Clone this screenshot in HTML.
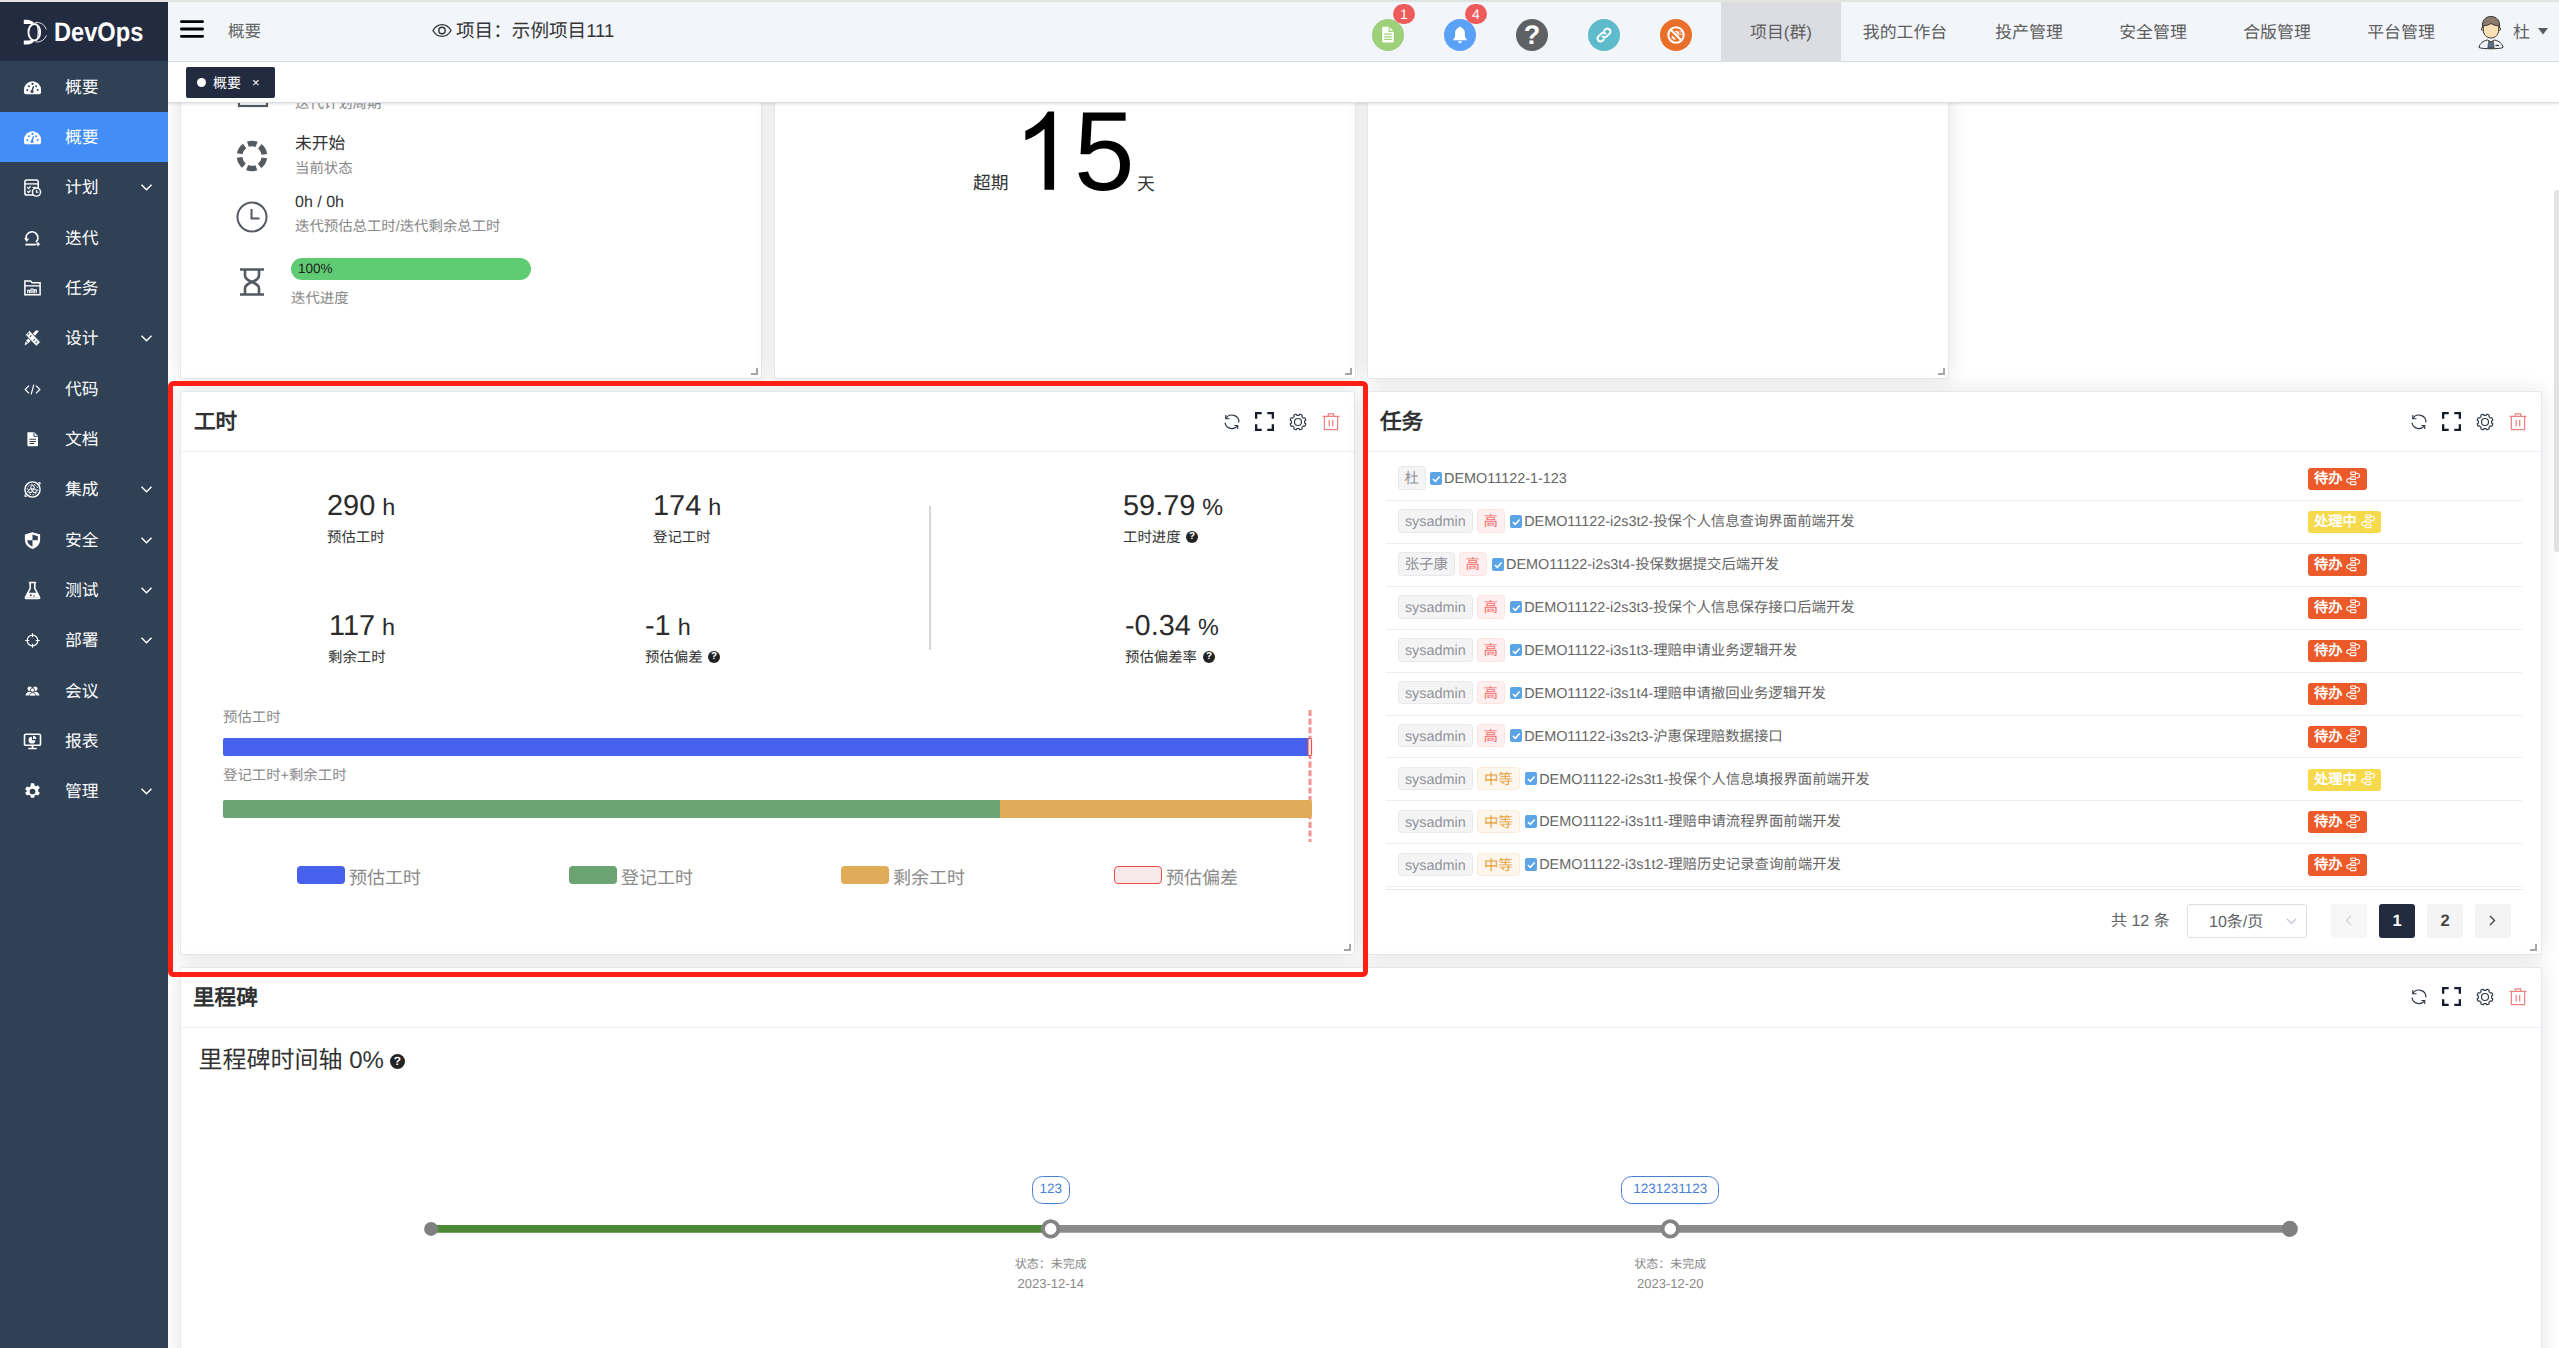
<!DOCTYPE html>
<html lang="zh-CN">
<head>
<meta charset="utf-8">
<title>DevOps</title>
<style>
*{box-sizing:border-box;margin:0;padding:0}
html,body{width:2559px;height:1348px;overflow:hidden;background:#fff}
body{font-family:"Liberation Sans",sans-serif;color:#333;position:relative;text-rendering:geometricPrecision}
.abs{position:absolute}
svg{display:block}
/* ---------- sidebar ---------- */
#side{position:absolute;left:0;top:0;width:168px;height:1348px;background:#304156;z-index:10}
#logo{position:absolute;left:0;top:0;width:168px;height:61px;background:#222b40}
#logo .t{position:absolute;left:53.500px;top:13.700px;font-size:26.700px;font-weight:bold;color:#fff;line-height:36px;transform:scaleX(.885);transform-origin:0 0;white-space:nowrap}
.mi{position:absolute;left:0;width:168px;height:50.350px;color:#fff;font-size:16.8px;line-height:50.4px}
.mi .tx{position:absolute;left:65px;top:1px}
.mi svg.ic{position:absolute;left:23px;top:16px;width:19px;height:19px}
.mi svg.ar{position:absolute;left:140px;top:21px;width:13px;height:9px}
.mi.act{background:#438ef6}
/* ---------- header ---------- */
#hdr{position:absolute;left:168px;top:0;width:2391px;height:62px;background:#f2f5fa;border-bottom:1px solid #d8dce5;z-index:8}
#topline{position:absolute;left:0;top:0;width:2559px;height:2px;background:#e3e4e2;z-index:20}
.nav{position:absolute;top:2px;height:59px;line-height:61px;font-size:16.900px;color:#5e5e5e;text-align:center;width:124px}
.nav.on{background:#dcdde2;width:120px}
.circ{position:absolute;top:19px;width:32px;height:32px;border-radius:16px}
.circ svg{position:absolute;left:7px;top:7px;width:18px;height:18px}
.bdg{position:absolute;top:4px;width:22px;height:19.500px;border-radius:10px;background:#ef5a5a;color:#fff;font-size:14px;line-height:20px;text-align:center}
/* ---------- tabs bar ---------- */
#tabs{position:absolute;left:168px;top:62px;width:2391px;height:41px;background:#fff;border-bottom:1px solid #d8dce5;box-shadow:0 1px 3px rgba(0,0,0,.12);z-index:7}
#tab1{position:absolute;left:18px;top:5px;width:89px;height:31px;background:#222b40;border-radius:2px;color:#fff;font-size:14px;line-height:32px}
/* ---------- cards ---------- */
.card{position:absolute;background:#fff;border:1px solid #e6e7ef;box-shadow:0 1px 22px rgba(0,0,0,.11);border-radius:3px}
.ctitle{position:absolute;left:13px;top:15px;font-size:21.6px;font-weight:bold;color:#303133;line-height:30px}
.chr{position:absolute;left:0;right:0;top:59px;height:1px;background:#ebeef5}
.rh{position:absolute;width:7px;height:7px;border-right:2px solid #a6a6a6;border-bottom:2px solid #a6a6a6}
.tool{position:absolute;top:20px;width:20px;height:20px}
/* tool icons */
.q{position:absolute;width:12px;height:12px;border-radius:6px;background:#222;color:#fff;font-size:10px;font-weight:bold;line-height:12.500px;text-align:center}
.num{position:absolute;white-space:nowrap;color:#2b2b2b;line-height:34px;font-size:28.900px;margin-top:2.300px;word-spacing:-1px}
.num small{font-size:23.400px}
.lab{position:absolute;white-space:nowrap;color:#333;font-size:14.400px;line-height:18px;margin-top:1px}
.glab{position:absolute;white-space:nowrap;color:#8a8a8a;font-size:14.400px;line-height:18px}
.leg{position:absolute;top:474px;width:48px;height:18px;border-radius:4px}
.legt{position:absolute;top:472px;font-size:18px;line-height:28px;color:#8a8a8a;white-space:nowrap}
/* tasks */
.trow{position:absolute;left:18px;width:1136px;height:42.900px;border-bottom:1px solid #ebeef5}
.tag{position:absolute;top:8.300px;height:23.500px;line-height:25.500px;padding:0 6px;font-size:14.400px;border-radius:3.500px;border:1px solid #e9e9ec;background:#f4f4f5;color:#909399;white-space:nowrap}
.tag.hi{background:#fef0f0;border-color:#fde2e2;color:#f56c6c}
.tag.mid{background:#fdf6ec;border-color:#faecd8;color:#e6a23c}
.chk{position:absolute;top:13.900px;width:12.300px;height:12.700px;border-radius:2px;background:#5ba4e6}
.chk svg{width:12.300px;height:12.700px}
.tt{position:absolute;top:11px;font-size:14.400px;line-height:20px;color:#666;white-space:nowrap}
.st{position:absolute;left:922px;top:10px;height:22px;border-radius:3px;color:#fff;font-size:14.200px;font-weight:bold;line-height:22px;white-space:nowrap}
.st.todo{background:#ec5a29;width:59px}
.st.doing{background:#f7d94c;width:73px}
.st span{position:absolute;left:6px;top:0}
.st svg{position:absolute;top:2.500px;width:15px;height:15px}
.pg{position:absolute;top:512px;width:36px;height:34px;border-radius:3px;background:#f4f4f5;text-align:center;line-height:35px;font-size:16.500px;font-weight:bold;color:#444}
/* milestone */
.mlab{position:absolute;height:27.400px;border:1.300px solid #4a7fd4;border-radius:10.500px;color:#4a7fd4;font-size:13.500px;line-height:24.500px;text-align:center;background:#fff}
.mtx{position:absolute;width:200px;text-align:center;color:#8a8a8a;white-space:nowrap}

</style>
</head>
<body>
<div id="side">
<div id="logo"><svg class="abs" style="left:20px;top:16px;width:32px;height:32px" viewBox="20 16 32 32"><path d="M23.800 19.800H27.500C30.500 20.200 32.600 21.400 34.200 22.900L31.800 24.300C30.600 24.050 29.600 24 28.500 24H23.800Z" fill="#fff"/><path d="M23.800 44.600H27.500C30.500 44.200 32.600 43 34.200 41.500L31.800 40.100C30.600 40.350 29.600 40.400 28.500 40.400H23.800Z" fill="#fff"/><ellipse cx="34.300" cy="32.200" rx="5.850" ry="8.200" fill="none" stroke="#fff" stroke-width="1.900"/><path d="M36.200 24.600Q42.200 32.200 36.200 39.800Q39.300 32.200 36.200 24.600Z" fill="#fff"/><path d="M35 22.500A9.800 9.800 0 0 1 46.300 29.500M46.400 35.400A9.800 9.800 0 0 1 35.500 41.900" fill="none" stroke="#fff" stroke-width=".9" opacity=".9"/></svg><div class="t">DevOps</div></div>
<div class="mi" style="top:61.5px"><svg class="ic" viewBox="0 0 20 20"><g transform=""><path d="M1 12.600a9 9.200 0 0 1 18 0v2.400a2 2 0 0 1-2 2H3a2 2 0 0 1-2-2z" fill="#fff"/><circle cx="4.6" cy="12.6" r="1.1" fill="#304156"/><circle cx="6.3" cy="8.6" r="1.1" fill="#304156"/><circle cx="10" cy="6.200" r="1.1" fill="#304156"/><circle cx="13.8" cy="8.6" r="1.1" fill="#304156"/><circle cx="15.5" cy="12.6" r="1.1" fill="#304156"/><path d="M10.9 9.3l-1.3 4.2" stroke="#304156" stroke-width="1.5" stroke-linecap="round"/><circle cx="9.5" cy="14.2" r="1.6" fill="#304156"/></g></svg><span class="tx">概要</span></div>
<div class="mi act" style="top:111.8px"><svg class="ic" viewBox="0 0 20 20"><g transform=""><path d="M1 12.600a9 9.200 0 0 1 18 0v2.400a2 2 0 0 1-2 2H3a2 2 0 0 1-2-2z" fill="#fff"/><circle cx="4.6" cy="12.6" r="1.1" fill="#438ef6"/><circle cx="6.3" cy="8.6" r="1.1" fill="#438ef6"/><circle cx="10" cy="6.200" r="1.1" fill="#438ef6"/><circle cx="13.8" cy="8.6" r="1.1" fill="#438ef6"/><circle cx="15.5" cy="12.6" r="1.1" fill="#438ef6"/><path d="M10.9 9.3l-1.3 4.2" stroke="#438ef6" stroke-width="1.5" stroke-linecap="round"/><circle cx="9.5" cy="14.2" r="1.6" fill="#438ef6"/></g></svg><span class="tx">概要</span></div>
<div class="mi" style="top:162.2px"><svg class="ic" viewBox="0 0 20 20"><g transform=""><rect x="2" y="2" width="14" height="16" rx="2" fill="none" stroke="#fff" stroke-width="1.6"/><path d="M2 6.2h14" stroke="#fff" stroke-width="1.4"/><path d="M4.5 9.8l1.3 1.3 2.2-2.4M4.5 14l1.3 1.3 2.2-2.4" fill="none" stroke="#fff" stroke-width="1.3"/><path d="M10 10h3.5" stroke="#fff" stroke-width="1.3"/><circle cx="14.2" cy="14.8" r="4.3" fill="#304156" stroke="#fff" stroke-width="1.5"/><path d="M14.2 12.6v2.4h2" fill="none" stroke="#fff" stroke-width="1.3"/></g></svg><span class="tx">计划</span><svg class="ar" viewBox="0 0 13 9"><path d="M1.500 1.800l5 5 5-5" fill="none" stroke="#fff" stroke-width="1.500"/></svg></div>
<div class="mi" style="top:212.6px"><svg class="ic" viewBox="0 0 20 20"><g transform=""><path d="M3.600 11.200A6.200 6.200 0 1 1 13.600 13.800" fill="none" stroke="#fff" stroke-width="1.900"/><path d="M1.200 9.800l2.600 4 2.800-3.600z" fill="#fff"/><path d="M2.500 16.400h11" stroke="#fff" stroke-width="1.900"/><path d="M15.800 13.400l.9 1.700 1.700.9-1.700.9-.9 1.700-.9-1.700-1.700-.9 1.700-.9z" fill="#fff"/></g></svg><span class="tx">迭代</span></div>
<div class="mi" style="top:262.9px"><svg class="ic" viewBox="0 0 20 20"><g transform="translate(0,-1)"><path d="M2 3h6l1.5 2H18v12.5H2z" fill="none" stroke="#fff" stroke-width="1.6"/><path d="M2 8.2h16" stroke="#fff" stroke-width="1.4"/><path d="M5 16v-3h2v3M8.5 16v-4.5h2V16M12 16v-3.5h2V16" fill="none" stroke="#fff" stroke-width="1.2"/></g></svg><span class="tx">任务</span></div>
<div class="mi" style="top:313.2px"><svg class="ic" viewBox="0 0 20 20"><g transform="translate(20,0) scale(-1,1)"><path d="M3.2 2.2l3-1 10.6 11.2-2.6 2.6z" fill="#fff"/><path d="M14.8 15.6l2.4-2.4 1.2 4z" fill="#fff"/><path d="M13.2 1.6l4.4 4.4-11.6 12.2-4.4-4.4z" fill="#fff" stroke="#304156" stroke-width="1"/><path d="M5 13l1.6 1.6M7.4 10.6L9 12.2M11.2 6.6l1.6 1.6M13.4 4.2L15 5.8" stroke="#304156" stroke-width="1.1"/></g></svg><span class="tx">设计</span><svg class="ar" viewBox="0 0 13 9"><path d="M1.500 1.800l5 5 5-5" fill="none" stroke="#fff" stroke-width="1.500"/></svg></div>
<div class="mi" style="top:363.6px"><svg class="ic" viewBox="0 0 20 20"><g transform="translate(.8,.8) scale(.92)"><path d="M6 5.5L1.6 10 6 14.5M14 5.5l4.4 4.5-4.4 4.5M11.6 4.5l-3.2 11" fill="none" stroke="#fff" stroke-width="1.350"/></g></svg><span class="tx">代码</span></div>
<div class="mi" style="top:413.9px"><svg class="ic" viewBox="0 0 20 20"><g transform="translate(1.600,1.200) scale(.86)"><path d="M4 1.5h8l4.5 4.5v11a1.5 1.5 0 0 1-1.5 1.5H5A1.5 1.5 0 0 1 3.5 17V2z" fill="#fff"/><path d="M11.6 1.8v4.6h4.6" fill="none" stroke="#304156" stroke-width="1.2"/><path d="M6 10h8M6 12.6h8M6 15.2h6" stroke="#304156" stroke-width="1.3"/></g></svg><span class="tx">文档</span></div>
<div class="mi" style="top:464.3px"><svg class="ic" viewBox="0 0 20 20"><g transform=""><circle cx="10" cy="10" r="8" fill="none" stroke="#fff" stroke-width="1.5"/><circle cx="10" cy="10" r="5.6" fill="none" stroke="#fff" stroke-width="1" stroke-dasharray="2 1.4"/><circle cx="10" cy="7.6" r="1.9" fill="none" stroke="#fff" stroke-width="1.1"/><circle cx="7.8" cy="11.4" r="1.9" fill="none" stroke="#fff" stroke-width="1.1"/><circle cx="12.2" cy="11.4" r="1.9" fill="none" stroke="#fff" stroke-width="1.1"/><path d="M16 2.6l2 .4-.6 2M4 17.4l-2-.4.6-2" fill="none" stroke="#fff" stroke-width="1.2"/></g></svg><span class="tx">集成</span><svg class="ar" viewBox="0 0 13 9"><path d="M1.500 1.800l5 5 5-5" fill="none" stroke="#fff" stroke-width="1.500"/></svg></div>
<div class="mi" style="top:514.7px"><svg class="ic" viewBox="0 0 20 20"><g transform=""><path d="M10 1.2l8 2.6v5.4c0 4.6-3.2 8-8 9.8-4.8-1.8-8-5.2-8-9.8V3.8z" fill="#fff"/><path d="M10 3.6v6.2h5.6V5.4z" fill="#304156"/><path d="M10 9.8v6.8c-3.2-1.4-5.4-3.8-5.6-6.8z" fill="#304156"/></g></svg><span class="tx">安全</span><svg class="ar" viewBox="0 0 13 9"><path d="M1.500 1.800l5 5 5-5" fill="none" stroke="#fff" stroke-width="1.500"/></svg></div>
<div class="mi" style="top:565.0px"><svg class="ic" viewBox="0 0 20 20"><g transform=""><path d="M6.2 1.6h7.6M7.6 1.6v6.2L2.6 17.2a.8.8 0 0 0 .7 1.2h13.4a.8.8 0 0 0 .7-1.2L12.4 7.8V1.6" fill="none" stroke="#fff" stroke-width="1.7"/><path d="M5.6 12.4h8.8l2.6 5.2H3z" fill="#fff"/><circle cx="8.2" cy="15" r="1" fill="#304156"/><circle cx="11.6" cy="15.8" r=".8" fill="#304156"/></g></svg><span class="tx">测试</span><svg class="ar" viewBox="0 0 13 9"><path d="M1.500 1.800l5 5 5-5" fill="none" stroke="#fff" stroke-width="1.500"/></svg></div>
<div class="mi" style="top:615.4px"><svg class="ic" viewBox="0 0 20 20"><g transform="translate(1.500,1.500) scale(.85)"><circle cx="10" cy="10" r="6.6" fill="none" stroke="#fff" stroke-width="1.4"/><path d="M10 1v5M10 14v5M1 10h5M14 10h5" stroke="#fff" stroke-width="1.4"/></g></svg><span class="tx">部署</span><svg class="ar" viewBox="0 0 13 9"><path d="M1.500 1.800l5 5 5-5" fill="none" stroke="#fff" stroke-width="1.500"/></svg></div>
<div class="mi" style="top:665.7px"><svg class="ic" viewBox="0 0 20 20"><g transform="translate(1.500,1.200) scale(.85)"><circle cx="6.6" cy="7" r="2.8" fill="#fff"/><circle cx="13.4" cy="7" r="2.8" fill="#fff"/><path d="M1.4 15.4c.4-3 2.4-4.6 5.2-4.6 1.4 0 2.6.4 3.4 1.2.8-.8 2-1.2 3.4-1.2 2.8 0 4.8 1.600 5.200 4.600z" fill="#fff"/><circle cx="10" cy="8.600" r="2.600" fill="#fff" stroke="#304156" stroke-width="1"/><path d="M5.600 16c.4-2.800 2-4.200 4.400-4.200s4 1.400 4.400 4.200z" fill="#fff" stroke="#304156" stroke-width="1"/></g></svg><span class="tx">会议</span></div>
<div class="mi" style="top:716.1px"><svg class="ic" viewBox="0 0 20 20"><g transform=""><rect x="1.6" y="2.4" width="16.8" height="11.6" rx="1.2" fill="none" stroke="#fff" stroke-width="1.7"/><path d="M10 14v2.600M5.600 17.400h8.800" stroke="#fff" stroke-width="1.700"/><path d="M9.400 5v3.600h3.600a3.600 3.600 0 1 1-3.600-3.600z" fill="#fff"/><path d="M10.600 3.900a3.600 3.600 0 0 1 3.500 3.500h-3.500z" fill="#fff"/></g></svg><span class="tx">报表</span></div>
<div class="mi" style="top:766.4px"><svg class="ic" viewBox="0 0 20 20"><g transform=""><path d="M8.300 1.200h3.400l.5 2.400 1.500.800 2.300-.900 1.700 2.900-1.800 1.600v1.800l1.800 1.600-1.700 2.900-2.300-.900-1.500.800-.5 2.400H8.300l-.5-2.400-1.500-.800-2.300.900-1.700-2.900 1.800-1.600V9.200L2.300 7.600 4 4.700l2.300.900 1.500-.800z" fill="#fff"/><circle cx="10" cy="10" r="3" fill="#304156"/></g></svg><span class="tx">管理</span><svg class="ar" viewBox="0 0 13 9"><path d="M1.500 1.800l5 5 5-5" fill="none" stroke="#fff" stroke-width="1.500"/></svg></div>
</div>
<div id="hdr">
<svg class="abs" style="left:12px;top:19px;width:24px;height:20px" viewBox="0 0 24 20"><path d="M1.400 2.600h21.200M1.400 10h21.200M1.400 17.400h21.200" stroke="#000" stroke-width="2.800" stroke-linecap="round"/></svg>
<div class="abs" style="left:60px;top:20px;font-size:16.600px;line-height:24px;color:#666">概要</div>
<svg class="abs" style="left:264px;top:23px;width:20px;height:15px" viewBox="0 0 20 15"><path d="M1 7.500C3.200 3.600 6.300 1.600 10 1.600s6.800 2 9 5.900c-2.200 3.900-5.300 5.900-9 5.900S3.200 11.400 1 7.500z" fill="none" stroke="#333" stroke-width="1.400"/><circle cx="10" cy="7.500" r="3.200" fill="none" stroke="#333" stroke-width="1.400"/></svg>
<div class="abs" style="left:288px;top:18px;font-size:18.600px;line-height:26px;color:#333;white-space:nowrap">项目：示例项目111</div>
<div class="circ" style="left:1203.9px;background:#9ecf79"><svg viewBox="0 0 18 18"><path d="M3.200 1.600a.8.8 0 0 1 .8-.8h6.400l4.400 4.400v10.600a.8.8 0 0 1-.8.8H4a.8.8 0 0 1-.8-.8z" fill="#fff"/><path d="M5.200 8.200h7.600M5.200 10.800h7.600M5.200 13.400h7.600" stroke="#9ecf79" stroke-width="1.300"/><path d="M10.200 .8v4.600h4.600" fill="none" stroke="#9ecf79" stroke-width="1.200"/></svg></div>
<div class="circ" style="left:1275.9px;background:#5aa2f8"><svg viewBox="1.300 1.300 15.400 15.400"><path d="M9 1.800c-.700 0-1.100.500-1.100 1.100-2 .600-3.100 2.300-3.100 4.500v3.200l-1.500 2v.800h11.400v-.800l-1.500-2V7.400c0-2.200-1.100-3.900-3.100-4.500 0-.600-.400-1.100-1.100-1.100zM7.400 14.400a1.600 1.600 0 0 0 3.200 0z" fill="#fff"/></svg></div>
<div class="circ" style="left:1347.9px;background:#5f6165"><div style="position:absolute;left:0;top:0;width:32px;height:32px;line-height:33px;text-align:center;color:#fff;font-weight:bold;font-size:27px">?</div></div>
<div class="circ" style="left:1419.9px;background:#5dbbcb"><svg viewBox="0 0 18 18"><path d="M7.600 10.400a3 3 0 0 0 4.200 0l3-3a3 3 0 0 0-4.200-4.200l-1.300 1.300M10.400 7.600a3 3 0 0 0-4.200 0l-3 3a3 3 0 0 0 4.200 4.200l1.300-1.300" fill="none" stroke="#fff" stroke-width="2" stroke-linecap="round"/></svg></div>
<div class="circ" style="left:1491.9px;background:#e8702a"><svg viewBox="0.800 0.800 16.400 16.400"><circle cx="9" cy="9" r="7" fill="none" stroke="#fff" stroke-width="1.900"/><path d="M4 4l10 10" stroke="#fff" stroke-width="1.900"/><path d="M8 5.200c2-.6 4 .6 4.200 2.600l-.4 2.200zM5.200 9.200l4.200 3.800-2.600.2c-1.200-.8-1.800-2.400-1.600-4z" fill="#fff"/><path d="M12.200 6.200h1.800M12.600 8.400h1.600M6.200 11.200l-1.400.8" stroke="#fff" stroke-width=".9"/></svg></div>
<div class="bdg" style="left:1225px">1</div>
<div class="bdg" style="left:1297px">4</div>
<div class="nav on" style="left:1553px">项目(群)</div>
<div class="nav" style="left:1675px">我的工作台</div>
<div class="nav" style="left:1799px">投产管理</div>
<div class="nav" style="left:1923px">安全管理</div>
<div class="nav" style="left:2047px">合版管理</div>
<div class="nav" style="left:2171px">平台管理</div>
<svg class="abs" style="left:2309px;top:14px;width:28px;height:36px" viewBox="0 0 28 36"><ellipse cx="14" cy="31" rx="13" ry="5" fill="#fafbfc"/><path d="M5.500 13.500c-.8-6.500 2.600-11 8.500-11s9.300 4.500 8.500 11l-1 1.500H6.500z" fill="#8d7b70" stroke="#3a3330" stroke-width="1"/><circle cx="5.800" cy="15" r="1.500" fill="#f8dcb0" stroke="#3a3330" stroke-width=".8"/><circle cx="22.200" cy="15" r="1.500" fill="#f8dcb0" stroke="#3a3330" stroke-width=".8"/><path d="M6.300 11.500c2.500.5 5-.5 7.700-2 2.700 1.500 5.200 2.500 7.700 2v4.500c0 4.500-3.200 8-7.700 8s-7.700-3.500-7.700-8z" fill="#fbe0b5" stroke="#3a3330" stroke-width="1"/><path d="M2 33.500c.5-4 4-6.500 8.500-7.500l3.500 2 3.500-2c4.500 1 8 3.500 8.500 7.500-3 1.700-21 1.700-24 0z" fill="#f3f4f5" stroke="#2e2e2e" stroke-width="1"/><path d="M11.600 27.500h4.800l.8 6.500h-6.400z" fill="#5b6c85" stroke="#333" stroke-width=".6"/><path d="M18.500 31.500h3.500" stroke="#333" stroke-width="1.200"/></svg>
<div class="abs" style="left:2345px;top:20.500px;font-size:17px;line-height:24px;color:#606060">杜</div>
<svg class="abs" style="left:2370px;top:28px;width:10px;height:6.500px" viewBox="0 0 10 6.500"><path d="M0 0h10L5 6.500z" fill="#5a5a60"/></svg>
</div>
<div id="topline"></div>
<div id="tabs"><div id="tab1"><span class="abs" style="left:11px;top:11px;width:9px;height:9px;border-radius:5px;background:#fff"></span><span class="abs" style="left:27px;top:0">概要</span><span class="abs" style="left:66px;top:0;font-size:13px">×</span></div></div>
<div class="card" style="left:180px;top:40px;width:582px;height:339px"><div class="abs" style="left:-1px;top:0;width:581px;height:339px">
<svg class="abs" style="left:56.500px;top:35px;width:32px;height:32px" viewBox="0 0 32 32"><rect x="2" y="4" width="28" height="26" fill="none" stroke="#555a61" stroke-width="2.200"/></svg>
<div class="abs" style="left:115px;top:54px;font-size:14.400px;color:#888;line-height:18px">迭代计划周期</div>
<svg class="abs" style="left:56px;top:99px;width:32px;height:32px" viewBox="0 0 32 32"><circle cx="16" cy="16" r="12.500" fill="none" stroke="#555a61" stroke-width="5.500" stroke-dasharray="9.400 3.690" stroke-dashoffset="4.700" transform="rotate(-90 16 16)"/></svg>
<div class="abs" style="left:115px;top:91px;font-size:16.800px;color:#333;line-height:24px">未开始</div>
<div class="abs" style="left:115px;top:119px;font-size:14.400px;color:#888;line-height:18px">当前状态</div>
<svg class="abs" style="left:56px;top:160px;width:32px;height:32px" viewBox="0 0 32 32"><circle cx="16" cy="16" r="14.500" fill="none" stroke="#555a61" stroke-width="2"/><path d="M15.500 8v9.500h8" fill="none" stroke="#555a61" stroke-width="2"/></svg>
<div class="abs" style="left:115px;top:150px;font-size:16px;color:#333;line-height:24px">0h / 0h</div>
<div class="abs" style="left:115px;top:177px;font-size:14.400px;color:#888;line-height:18px">迭代预估总工时/迭代剩余总工时</div>
<svg class="abs" style="left:60px;top:227px;width:24px;height:28px" viewBox="0 0 24 28"><path d="M0 1.500h24M0 26.500h24" stroke="#555a61" stroke-width="2.400"/><path d="M5 2v5.500c0 3.500 3.500 5 7 6.500 3.500-1.500 7-3 7-6.500V2M5 26v-5.500c0-3.500 3.500-5 7-6.500 3.500 1.500 7 3 7 6.500V26" fill="none" stroke="#555a61" stroke-width="2.600"/></svg>
<div class="abs" style="left:111px;top:217px;width:240px;height:22px;border-radius:11px;background:#5fcb73"></div>
<div class="abs" style="left:118px;top:219px;font-size:13.500px;color:#222;line-height:18px">100%</div>
<div class="abs" style="left:111px;top:249px;font-size:14.400px;color:#888;line-height:18px">迭代进度</div>
<div class="rh" style="left:571px;top:327px"></div>
</div></div>
<div class="card" style="left:774px;top:40px;width:582px;height:339px">
<div class="abs" style="left:198px;top:130px;font-size:17.800px;color:#333;line-height:24px">超期</div>
<svg class="abs" style="left:245px;top:65px;width:44px;height:90px" viewBox="0 0 44 90"><path transform="translate(-6.500,83.800) scale(.0532,-.0532)" d="M763 0H583V1147Q518 1085 412.500 1023Q307 961 223 930V1104Q374 1175 487 1276Q600 1377 647 1472H763Z" fill="#000"/></svg>
<div class="abs" id="five" style="left:299px;top:49px;font-size:112.800px;color:#000;line-height:120px;transform:scaleX(.965);transform-origin:0 0;margin-top:.7px">5</div>
<div class="abs" style="left:362px;top:131px;font-size:17.800px;color:#333;line-height:24px">天</div>
<div class="rh" style="left:570px;top:326.500px"></div>
</div>
<div class="card" style="left:1367px;top:40px;width:582px;height:339px">
<div class="rh" style="left:570px;top:327px"></div>
</div>
<div class="abs" style="left:2553.500px;top:190px;width:6px;height:362px;border-radius:3px;background:#e3e3e3"></div>
<div class="abs" style="left:168px;top:381.100px;width:1199.700px;height:595.600px;border:5.400px solid #ff2015;border-radius:5.500px;z-index:12;pointer-events:none"></div>
<div class="card" style="left:180px;top:391px;width:1175px;height:564px">
<div class="ctitle">工时</div>
<svg class="abs" style="left:1040.5px;top:19.8px;width:20px;height:20px" viewBox="-10 -10 20 20"><path d="M-6.200 -3.300A7 7 0 0 1 6.900 .5M-7 .6A7 7 0 0 0 5.700 3.500" fill="none" stroke="#2f3744" stroke-width="1.150"/><path d="M-6.200 -6.900V-3.300H-2.500M2.400 3.500H5.700V6.900" fill="none" stroke="#2f3744" stroke-width="1.150"/></svg>
<svg class="abs" style="left:1074.0px;top:20.0px;width:19px;height:19px" viewBox="0 0 19 19"><path d="M1.150 6.700V1.150h5.550M12.300 1.150h5.550v5.550M17.850 12.300v5.550h-5.550M6.700 17.850H1.150v-5.550" fill="none" stroke="#141c2e" stroke-width="2.300"/></svg>
<svg class="abs" style="left:1107.0px;top:19.9px;width:20px;height:20px" viewBox="0 0 20 20"><path d="M11.04 3.38L12.04 2.16L14.10 3.02L13.95 4.59L15.41 6.05L16.98 5.90L17.84 7.96L16.62 8.96L16.62 11.04L17.84 12.04L16.98 14.10L15.41 13.95L13.95 15.41L14.10 16.98L12.04 17.84L11.04 16.62L8.96 16.62L7.96 17.84L5.90 16.98L6.05 15.41L4.59 13.95L3.02 14.10L2.16 12.04L3.38 11.04L3.38 8.96L2.16 7.96L3.02 5.90L4.59 6.05L6.05 4.59L5.90 3.02L7.96 2.16L8.96 3.38Z" fill="none" stroke="#2f3744" stroke-width="1.150" stroke-linejoin="round"/><circle cx="10" cy="10" r="3.500" fill="none" stroke="#2f3744" stroke-width="1.150"/></svg>
<svg class="abs" style="left:1141.1px;top:19.0px;width:18px;height:20px" viewBox="0 0 18 20"><path d="M.5 5.300h17M6.300 5.300V2.800h5.400v2.500M2.400 5.300v13.200h13.200V5.300M7.200 9v6.400M10.700 9v6.400" fill="none" stroke="#ef8383" stroke-width="1.250"/></svg>
<div class="chr"></div>
<div class="num" style="left:146px;top:95px">290 <small>h</small></div>
<div class="lab" style="left:146px;top:136px">预估工时</div>
<div class="num" style="left:472px;top:95px">174 <small>h</small></div>
<div class="lab" style="left:472px;top:136px">登记工时</div>
<div class="num" style="left:942px;top:95px">59.79 <small>%</small></div>
<div class="lab" style="left:942px;top:136px">工时进度</div><div class="q" style="left:1005px;top:139px">?</div>
<div class="num" style="left:148px;top:215px">117 <small>h</small></div>
<div class="lab" style="left:147px;top:256px">剩余工时</div>
<div class="num" style="left:464px;top:215px">-1 <small>h</small></div>
<div class="lab" style="left:464px;top:256px">预估偏差</div><div class="q" style="left:527px;top:259px">?</div>
<div class="num" style="left:944px;top:215px">-0.34 <small>%</small></div>
<div class="lab" style="left:944px;top:256px">预估偏差率</div><div class="q" style="left:1022px;top:259px">?</div>
<div class="abs" style="left:748px;top:114px;width:1.500px;height:144px;background:#d5d6db"></div>
<div class="glab" style="left:42px;top:317px">预估工时</div>
<div class="abs" style="left:42px;top:346px;width:1088px;height:18px;background:#4661eb;border-radius:2px"></div>
<svg class="abs" style="left:1125.7px;top:317.8px;width:6px;height:134px" viewBox="0 0 6 134"><path d="M3 0v132" stroke="#f59393" stroke-width="3" stroke-dasharray="6.100 2.500"/><rect x="1" y="28.500" width="3.600" height="17" fill="#fde9e9" stroke="#f03a3a" stroke-width="1" rx="1"/></svg>
<div class="glab" style="left:42px;top:375px">登记工时+剩余工时</div>
<div class="abs" style="left:42px;top:408px;width:778px;height:18px;background:#6ba473;border-radius:2px 0 0 2px"></div>
<div class="abs" style="left:819px;top:408px;width:312px;height:18px;background:#e0ac59;border-radius:0 2px 2px 0"></div>
<div class="leg" style="left:116px;background:#4661eb"></div><div class="legt" style="left:168px">预估工时</div>
<div class="leg" style="left:388px;background:#6ba473"></div><div class="legt" style="left:440px">登记工时</div>
<div class="leg" style="left:660px;background:#e0ac59"></div><div class="legt" style="left:712px">剩余工时</div>
<div class="leg" style="left:933px;background:#f5e9e9;border:1.300px solid #f04a4a"></div><div class="legt" style="left:985px">预估偏差</div>
<div class="rh" style="left:1163px;top:552px"></div>
</div>
<div class="card" style="left:1367px;top:391px;width:1175px;height:564px">
<div class="ctitle" style="left:12px">任务</div>
<svg class="abs" style="left:1040.5px;top:19.8px;width:20px;height:20px" viewBox="-10 -10 20 20"><path d="M-6.200 -3.300A7 7 0 0 1 6.900 .5M-7 .6A7 7 0 0 0 5.700 3.500" fill="none" stroke="#2f3744" stroke-width="1.150"/><path d="M-6.200 -6.900V-3.300H-2.500M2.400 3.500H5.700V6.900" fill="none" stroke="#2f3744" stroke-width="1.150"/></svg>
<svg class="abs" style="left:1074.0px;top:20.0px;width:19px;height:19px" viewBox="0 0 19 19"><path d="M1.150 6.700V1.150h5.550M12.300 1.150h5.550v5.550M17.850 12.300v5.550h-5.550M6.700 17.850H1.150v-5.550" fill="none" stroke="#141c2e" stroke-width="2.300"/></svg>
<svg class="abs" style="left:1107.0px;top:19.9px;width:20px;height:20px" viewBox="0 0 20 20"><path d="M11.04 3.38L12.04 2.16L14.10 3.02L13.95 4.59L15.41 6.05L16.98 5.90L17.84 7.96L16.62 8.96L16.62 11.04L17.84 12.04L16.98 14.10L15.41 13.95L13.95 15.41L14.10 16.98L12.04 17.84L11.04 16.62L8.96 16.62L7.96 17.84L5.90 16.98L6.05 15.41L4.59 13.95L3.02 14.10L2.16 12.04L3.38 11.04L3.38 8.96L2.16 7.96L3.02 5.90L4.59 6.05L6.05 4.59L5.90 3.02L7.96 2.16L8.96 3.38Z" fill="none" stroke="#2f3744" stroke-width="1.150" stroke-linejoin="round"/><circle cx="10" cy="10" r="3.500" fill="none" stroke="#2f3744" stroke-width="1.150"/></svg>
<svg class="abs" style="left:1141.1px;top:19.0px;width:18px;height:20px" viewBox="0 0 18 20"><path d="M.5 5.300h17M6.300 5.300V2.800h5.400v2.500M2.400 5.300v13.200h13.200V5.300M7.200 9v6.400M10.700 9v6.400" fill="none" stroke="#ef8383" stroke-width="1.250"/></svg>
<div class="chr"></div>
<div class="trow" style="top:66.2px">
<span class="tag" style="left:12.0px;width:27.5px;text-align:center;padding:0">杜</span>
<span class="chk" style="left:43.9px"><svg viewBox="0 0 12 12"><path d="M2.800 6.600l2.400 2.300 4.200-4.700" fill="none" stroke="#fff" stroke-width="1.500"/></svg></span>
<span class="tt" style="left:58.1px">DEMO11122-1-123</span>
<div class="st todo"><span>待办</span><svg style="left:38.300px" viewBox="0 0 15 15"><rect x="4.700" y="1" width="5" height="2.600" rx=".5" fill="none" stroke="#fff" stroke-width="1.100"/><rect x="4.700" y="5.800" width="5" height="2.600" rx=".5" fill="none" stroke="#fff" stroke-width="1.100"/><rect x="4.500" y="10.800" width="5.400" height="2.800" rx=".5" fill="none" stroke="#fff" stroke-width="1.100"/><path d="M9.900 2.200c2.200 0 3.800.9 3.800 2.400 0 1.200-1 2.200-2.600 2.700M4.600 7.400c-2.400.2-3.900 1.100-3.900 2.400s1.500 2.200 3.700 2.400" fill="none" stroke="#fff" stroke-width="1.100"/></svg></div>
</div>
<div class="trow" style="top:109.1px">
<span class="tag" style="left:12.0px;width:74.6px;text-align:center;padding:0">sysadmin</span>
<span class="tag hi" style="left:90.8px;width:28px;text-align:center;padding:0">高</span>
<span class="chk" style="left:124.0px"><svg viewBox="0 0 12 12"><path d="M2.800 6.600l2.400 2.300 4.200-4.700" fill="none" stroke="#fff" stroke-width="1.500"/></svg></span>
<span class="tt" style="left:138.2px">DEMO11122-i2s3t2-投保个人信息查询界面前端开发</span>
<div class="st doing"><span>处理中</span><svg style="left:52.800px" viewBox="0 0 15 15"><rect x="4.700" y="1" width="5" height="2.600" rx=".5" fill="none" stroke="#fff" stroke-width="1.100"/><rect x="4.700" y="5.800" width="5" height="2.600" rx=".5" fill="none" stroke="#fff" stroke-width="1.100"/><rect x="4.500" y="10.800" width="5.400" height="2.800" rx=".5" fill="none" stroke="#fff" stroke-width="1.100"/><path d="M9.900 2.200c2.200 0 3.800.9 3.800 2.400 0 1.200-1 2.200-2.600 2.700M4.600 7.400c-2.400.2-3.900 1.100-3.900 2.400s1.500 2.200 3.700 2.400" fill="none" stroke="#fff" stroke-width="1.100"/></svg></div>
</div>
<div class="trow" style="top:152.0px">
<span class="tag" style="left:12.0px;width:56.5px;text-align:center;padding:0">张子康</span>
<span class="tag hi" style="left:72.7px;width:28px;text-align:center;padding:0">高</span>
<span class="chk" style="left:105.9px"><svg viewBox="0 0 12 12"><path d="M2.800 6.600l2.400 2.300 4.200-4.700" fill="none" stroke="#fff" stroke-width="1.500"/></svg></span>
<span class="tt" style="left:120.1px">DEMO11122-i2s3t4-投保数据提交后端开发</span>
<div class="st todo"><span>待办</span><svg style="left:38.300px" viewBox="0 0 15 15"><rect x="4.700" y="1" width="5" height="2.600" rx=".5" fill="none" stroke="#fff" stroke-width="1.100"/><rect x="4.700" y="5.800" width="5" height="2.600" rx=".5" fill="none" stroke="#fff" stroke-width="1.100"/><rect x="4.500" y="10.800" width="5.400" height="2.800" rx=".5" fill="none" stroke="#fff" stroke-width="1.100"/><path d="M9.900 2.200c2.200 0 3.800.9 3.800 2.400 0 1.200-1 2.200-2.600 2.700M4.600 7.400c-2.400.2-3.900 1.100-3.900 2.400s1.500 2.200 3.700 2.400" fill="none" stroke="#fff" stroke-width="1.100"/></svg></div>
</div>
<div class="trow" style="top:194.9px">
<span class="tag" style="left:12.0px;width:74.6px;text-align:center;padding:0">sysadmin</span>
<span class="tag hi" style="left:90.8px;width:28px;text-align:center;padding:0">高</span>
<span class="chk" style="left:124.0px"><svg viewBox="0 0 12 12"><path d="M2.800 6.600l2.400 2.300 4.200-4.700" fill="none" stroke="#fff" stroke-width="1.500"/></svg></span>
<span class="tt" style="left:138.2px">DEMO11122-i2s3t3-投保个人信息保存接口后端开发</span>
<div class="st todo"><span>待办</span><svg style="left:38.300px" viewBox="0 0 15 15"><rect x="4.700" y="1" width="5" height="2.600" rx=".5" fill="none" stroke="#fff" stroke-width="1.100"/><rect x="4.700" y="5.800" width="5" height="2.600" rx=".5" fill="none" stroke="#fff" stroke-width="1.100"/><rect x="4.500" y="10.800" width="5.400" height="2.800" rx=".5" fill="none" stroke="#fff" stroke-width="1.100"/><path d="M9.900 2.200c2.200 0 3.800.9 3.800 2.400 0 1.200-1 2.200-2.600 2.700M4.600 7.400c-2.400.2-3.900 1.100-3.900 2.400s1.500 2.200 3.700 2.400" fill="none" stroke="#fff" stroke-width="1.100"/></svg></div>
</div>
<div class="trow" style="top:237.8px">
<span class="tag" style="left:12.0px;width:74.6px;text-align:center;padding:0">sysadmin</span>
<span class="tag hi" style="left:90.8px;width:28px;text-align:center;padding:0">高</span>
<span class="chk" style="left:124.0px"><svg viewBox="0 0 12 12"><path d="M2.800 6.600l2.400 2.300 4.200-4.700" fill="none" stroke="#fff" stroke-width="1.500"/></svg></span>
<span class="tt" style="left:138.2px">DEMO11122-i3s1t3-理赔申请业务逻辑开发</span>
<div class="st todo"><span>待办</span><svg style="left:38.300px" viewBox="0 0 15 15"><rect x="4.700" y="1" width="5" height="2.600" rx=".5" fill="none" stroke="#fff" stroke-width="1.100"/><rect x="4.700" y="5.800" width="5" height="2.600" rx=".5" fill="none" stroke="#fff" stroke-width="1.100"/><rect x="4.500" y="10.800" width="5.400" height="2.800" rx=".5" fill="none" stroke="#fff" stroke-width="1.100"/><path d="M9.900 2.200c2.200 0 3.800.9 3.800 2.400 0 1.200-1 2.200-2.600 2.700M4.600 7.400c-2.400.2-3.900 1.100-3.900 2.400s1.500 2.200 3.700 2.400" fill="none" stroke="#fff" stroke-width="1.100"/></svg></div>
</div>
<div class="trow" style="top:280.7px">
<span class="tag" style="left:12.0px;width:74.6px;text-align:center;padding:0">sysadmin</span>
<span class="tag hi" style="left:90.8px;width:28px;text-align:center;padding:0">高</span>
<span class="chk" style="left:124.0px"><svg viewBox="0 0 12 12"><path d="M2.800 6.600l2.400 2.300 4.200-4.700" fill="none" stroke="#fff" stroke-width="1.500"/></svg></span>
<span class="tt" style="left:138.2px">DEMO11122-i3s1t4-理赔申请撤回业务逻辑开发</span>
<div class="st todo"><span>待办</span><svg style="left:38.300px" viewBox="0 0 15 15"><rect x="4.700" y="1" width="5" height="2.600" rx=".5" fill="none" stroke="#fff" stroke-width="1.100"/><rect x="4.700" y="5.800" width="5" height="2.600" rx=".5" fill="none" stroke="#fff" stroke-width="1.100"/><rect x="4.500" y="10.800" width="5.400" height="2.800" rx=".5" fill="none" stroke="#fff" stroke-width="1.100"/><path d="M9.900 2.200c2.200 0 3.800.9 3.800 2.400 0 1.200-1 2.200-2.600 2.700M4.600 7.400c-2.400.2-3.900 1.100-3.900 2.400s1.500 2.200 3.700 2.400" fill="none" stroke="#fff" stroke-width="1.100"/></svg></div>
</div>
<div class="trow" style="top:323.6px">
<span class="tag" style="left:12.0px;width:74.6px;text-align:center;padding:0">sysadmin</span>
<span class="tag hi" style="left:90.8px;width:28px;text-align:center;padding:0">高</span>
<span class="chk" style="left:124.0px"><svg viewBox="0 0 12 12"><path d="M2.800 6.600l2.400 2.300 4.200-4.700" fill="none" stroke="#fff" stroke-width="1.500"/></svg></span>
<span class="tt" style="left:138.2px">DEMO11122-i3s2t3-沪惠保理赔数据接口</span>
<div class="st todo"><span>待办</span><svg style="left:38.300px" viewBox="0 0 15 15"><rect x="4.700" y="1" width="5" height="2.600" rx=".5" fill="none" stroke="#fff" stroke-width="1.100"/><rect x="4.700" y="5.800" width="5" height="2.600" rx=".5" fill="none" stroke="#fff" stroke-width="1.100"/><rect x="4.500" y="10.800" width="5.400" height="2.800" rx=".5" fill="none" stroke="#fff" stroke-width="1.100"/><path d="M9.900 2.200c2.200 0 3.800.9 3.800 2.400 0 1.200-1 2.200-2.600 2.700M4.600 7.400c-2.400.2-3.900 1.100-3.900 2.400s1.500 2.200 3.700 2.400" fill="none" stroke="#fff" stroke-width="1.100"/></svg></div>
</div>
<div class="trow" style="top:366.5px">
<span class="tag" style="left:12.0px;width:74.6px;text-align:center;padding:0">sysadmin</span>
<span class="tag mid" style="left:90.8px;width:43px;text-align:center;padding:0">中等</span>
<span class="chk" style="left:139.0px"><svg viewBox="0 0 12 12"><path d="M2.800 6.600l2.400 2.300 4.200-4.700" fill="none" stroke="#fff" stroke-width="1.500"/></svg></span>
<span class="tt" style="left:153.2px">DEMO11122-i2s3t1-投保个人信息填报界面前端开发</span>
<div class="st doing"><span>处理中</span><svg style="left:52.800px" viewBox="0 0 15 15"><rect x="4.700" y="1" width="5" height="2.600" rx=".5" fill="none" stroke="#fff" stroke-width="1.100"/><rect x="4.700" y="5.800" width="5" height="2.600" rx=".5" fill="none" stroke="#fff" stroke-width="1.100"/><rect x="4.500" y="10.800" width="5.400" height="2.800" rx=".5" fill="none" stroke="#fff" stroke-width="1.100"/><path d="M9.900 2.200c2.200 0 3.800.9 3.800 2.400 0 1.200-1 2.200-2.600 2.700M4.600 7.400c-2.400.2-3.900 1.100-3.900 2.400s1.500 2.200 3.700 2.400" fill="none" stroke="#fff" stroke-width="1.100"/></svg></div>
</div>
<div class="trow" style="top:409.4px">
<span class="tag" style="left:12.0px;width:74.6px;text-align:center;padding:0">sysadmin</span>
<span class="tag mid" style="left:90.8px;width:43px;text-align:center;padding:0">中等</span>
<span class="chk" style="left:139.0px"><svg viewBox="0 0 12 12"><path d="M2.800 6.600l2.400 2.300 4.200-4.700" fill="none" stroke="#fff" stroke-width="1.500"/></svg></span>
<span class="tt" style="left:153.2px">DEMO11122-i3s1t1-理赔申请流程界面前端开发</span>
<div class="st todo"><span>待办</span><svg style="left:38.300px" viewBox="0 0 15 15"><rect x="4.700" y="1" width="5" height="2.600" rx=".5" fill="none" stroke="#fff" stroke-width="1.100"/><rect x="4.700" y="5.800" width="5" height="2.600" rx=".5" fill="none" stroke="#fff" stroke-width="1.100"/><rect x="4.500" y="10.800" width="5.400" height="2.800" rx=".5" fill="none" stroke="#fff" stroke-width="1.100"/><path d="M9.900 2.200c2.200 0 3.800.9 3.800 2.400 0 1.200-1 2.200-2.600 2.700M4.600 7.400c-2.400.2-3.900 1.100-3.900 2.400s1.500 2.200 3.700 2.400" fill="none" stroke="#fff" stroke-width="1.100"/></svg></div>
</div>
<div class="trow" style="top:452.3px">
<span class="tag" style="left:12.0px;width:74.6px;text-align:center;padding:0">sysadmin</span>
<span class="tag mid" style="left:90.8px;width:43px;text-align:center;padding:0">中等</span>
<span class="chk" style="left:139.0px"><svg viewBox="0 0 12 12"><path d="M2.800 6.600l2.400 2.300 4.200-4.700" fill="none" stroke="#fff" stroke-width="1.500"/></svg></span>
<span class="tt" style="left:153.2px">DEMO11122-i3s1t2-理赔历史记录查询前端开发</span>
<div class="st todo"><span>待办</span><svg style="left:38.300px" viewBox="0 0 15 15"><rect x="4.700" y="1" width="5" height="2.600" rx=".5" fill="none" stroke="#fff" stroke-width="1.100"/><rect x="4.700" y="5.800" width="5" height="2.600" rx=".5" fill="none" stroke="#fff" stroke-width="1.100"/><rect x="4.500" y="10.800" width="5.400" height="2.800" rx=".5" fill="none" stroke="#fff" stroke-width="1.100"/><path d="M9.900 2.200c2.200 0 3.800.9 3.800 2.400 0 1.200-1 2.200-2.600 2.700M4.600 7.400c-2.400.2-3.900 1.100-3.900 2.400s1.500 2.200 3.700 2.400" fill="none" stroke="#fff" stroke-width="1.100"/></svg></div>
</div>
<div class="abs" style="left:18px;top:497px;width:1137px;height:1px;background:#e6e9f0"></div>
<div class="abs" style="left:743.0px;top:517.5px;font-size:16px;line-height:24px;color:#606266;white-space:nowrap">共 12 条</div>
<div class="abs" style="left:819px;top:512px;width:120px;height:34px;border:1px solid #dcdfe6;border-radius:3px"></div>
<div class="abs" style="left:841.0px;top:518.5px;font-size:16px;line-height:24px;color:#606266;white-space:nowrap">10条/页</div>
<svg class="abs" style="left:918px;top:526px;width:11px;height:7px" viewBox="0 0 11 7"><path d="M1 1l4.500 4.500L10 1" fill="none" stroke="#c0c4cc" stroke-width="1.200"/></svg>
<div class="pg" style="left:963px;background:#f7f7f8"><svg style="margin:11px 0 0 14px;width:7px;height:11px" viewBox="0 0 7 11"><path d="M6 1L1.500 5.500 6 10" fill="none" stroke="#d0d3d9" stroke-width="1.300"/></svg></div>
<div class="pg" style="left:1011px;background:#222b40;color:#fff">1</div>
<div class="pg" style="left:1059px">2</div>
<div class="pg" style="left:1107px"><svg style="margin:11px 0 0 14px;width:7px;height:11px" viewBox="0 0 7 11"><path d="M1 1l4.500 4.500L1 10" fill="none" stroke="#444" stroke-width="1.400"/></svg></div>
<div class="rh" style="left:1162px;top:552px"></div>
</div>
<div class="card" style="left:180px;top:967px;width:2362px;height:400px">
<div class="ctitle" style="top:15px;left:12px">里程碑</div>
<svg class="abs" style="left:2227.5px;top:18.8px;width:20px;height:20px" viewBox="-10 -10 20 20"><path d="M-6.200 -3.300A7 7 0 0 1 6.900 .5M-7 .6A7 7 0 0 0 5.700 3.500" fill="none" stroke="#2f3744" stroke-width="1.150"/><path d="M-6.200 -6.900V-3.300H-2.500M2.400 3.500H5.700V6.900" fill="none" stroke="#2f3744" stroke-width="1.150"/></svg>
<svg class="abs" style="left:2261.0px;top:19.0px;width:19px;height:19px" viewBox="0 0 19 19"><path d="M1.150 6.700V1.150h5.550M12.300 1.150h5.550v5.550M17.850 12.300v5.550h-5.550M6.700 17.850H1.150v-5.550" fill="none" stroke="#141c2e" stroke-width="2.300"/></svg>
<svg class="abs" style="left:2294.0px;top:18.9px;width:20px;height:20px" viewBox="0 0 20 20"><path d="M11.04 3.38L12.04 2.16L14.10 3.02L13.95 4.59L15.41 6.05L16.98 5.90L17.84 7.96L16.62 8.96L16.62 11.04L17.84 12.04L16.98 14.10L15.41 13.95L13.95 15.41L14.10 16.98L12.04 17.84L11.04 16.62L8.96 16.62L7.96 17.84L5.90 16.98L6.05 15.41L4.59 13.95L3.02 14.10L2.16 12.04L3.38 11.04L3.38 8.96L2.16 7.96L3.02 5.90L4.59 6.05L6.05 4.59L5.90 3.02L7.96 2.16L8.96 3.38Z" fill="none" stroke="#2f3744" stroke-width="1.150" stroke-linejoin="round"/><circle cx="10" cy="10" r="3.500" fill="none" stroke="#2f3744" stroke-width="1.150"/></svg>
<svg class="abs" style="left:2328.1px;top:18.0px;width:18px;height:20px" viewBox="0 0 18 20"><path d="M.5 5.300h17M6.300 5.300V2.800h5.400v2.500M2.400 5.300v13.200h13.200V5.300M7.200 9v6.400M10.700 9v6.400" fill="none" stroke="#ef8383" stroke-width="1.250"/></svg>
<div class="chr"></div>
<div class="abs" style="left:17.5px;top:76.0px;font-size:24px;line-height:34px;color:#333;white-space:nowrap">里程碑时间轴 0%</div>
<div class="q" style="left:209.0px;top:85.5px;width:15px;height:15px;border-radius:8px;line-height:15.500px;font-size:12px">?</div>
<svg class="abs" style="left:234px;top:240px;width:1890px;height:40px" viewBox="0 0 1890 40">
<path d="M16.150 20.9 H635.700" stroke="#4a8a35" stroke-width="7.800"/>
<path d="M635.700 20.9 H1874.800" stroke="#8b8b8b" stroke-width="7.800"/>
<circle cx="16.150" cy="20.9" r="7" fill="#808080"/>
<circle cx="1874.800" cy="20.9" r="8.050" fill="#808080"/>
<circle cx="635.70" cy="20.9" r="7.700" fill="#fff" stroke="#848484" stroke-width="3.800"/>
<circle cx="1255.25" cy="20.9" r="7.700" fill="#fff" stroke="#848484" stroke-width="3.800"/>
</svg>
<div class="mlab" style="left:850.7px;top:208.3px;width:38.200px">123</div>
<div class="mlab" style="left:1440.3px;top:208.3px;width:98px">1231231123</div>
<div class="mtx" style="left:769.8px;top:288.0px;font-size:12px;line-height:16px">状态：未完成</div>
<div class="mtx" style="left:769.8px;top:308.0px;font-size:13px;line-height:16px">2023-12-14</div>
<div class="mtx" style="left:1389.3px;top:288.0px;font-size:12px;line-height:16px">状态：未完成</div>
<div class="mtx" style="left:1389.3px;top:308.0px;font-size:13px;line-height:16px">2023-12-20</div>
</div>
</body>
</html>
